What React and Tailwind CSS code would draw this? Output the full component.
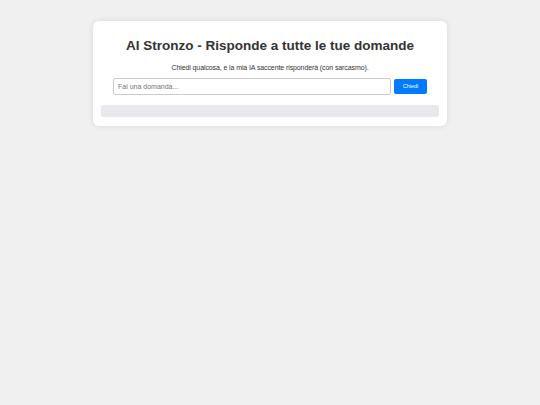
import { useState } from 'react';

export default function App() {
  const [question, setQuestion] = useState('');

  return (
    <div
      className="min-h-screen w-full bg-[#f0f0f0] pt-[21px]"
      style={{ fontFamily: '"Liberation Sans", Arial, Helvetica, sans-serif' }}
    >
      <div className="mx-auto w-[354px] rounded-[6px] bg-white px-[8px] pt-[15px] pb-[9px] shadow-[0_0_6px_rgba(0,0,0,0.1)]">
        <h1 className="text-center text-[13.5px] font-bold leading-[20px] text-[#333333]">
          AI Stronzo - Risponde a tutte le tue domande
        </h1>
        <p className="mt-[8px] text-center text-[7px] leading-[8px] tracking-[-0.1px] text-[#333333]">
          Chiedi qualcosa, e la mia IA saccente risponderà (con sarcasmo).
        </p>

        {/* Form */}
        <div className="mt-[6px] flex items-center gap-[3px] px-[12px]">
          <input
            type="text"
            value={question}
            onChange={(e) => setQuestion(e.target.value)}
            placeholder="Fai una domanda..."
            className="h-[17px] flex-1 rounded-[2px] border border-[#cccccc] px-[4px] text-[7px] text-[#333333] outline-none placeholder:text-[#757575]"
          />
          <button className="h-[15px] w-[33px] rounded-[2px] bg-[#007bff] text-[5.5px] text-white">
            Chiedi
          </button>
        </div>

        {/* Response */}
        <div className="mt-[10px] h-[12px] rounded-[2px] bg-[#e9e9ed]"></div>
      </div>
    </div>
  );
}
